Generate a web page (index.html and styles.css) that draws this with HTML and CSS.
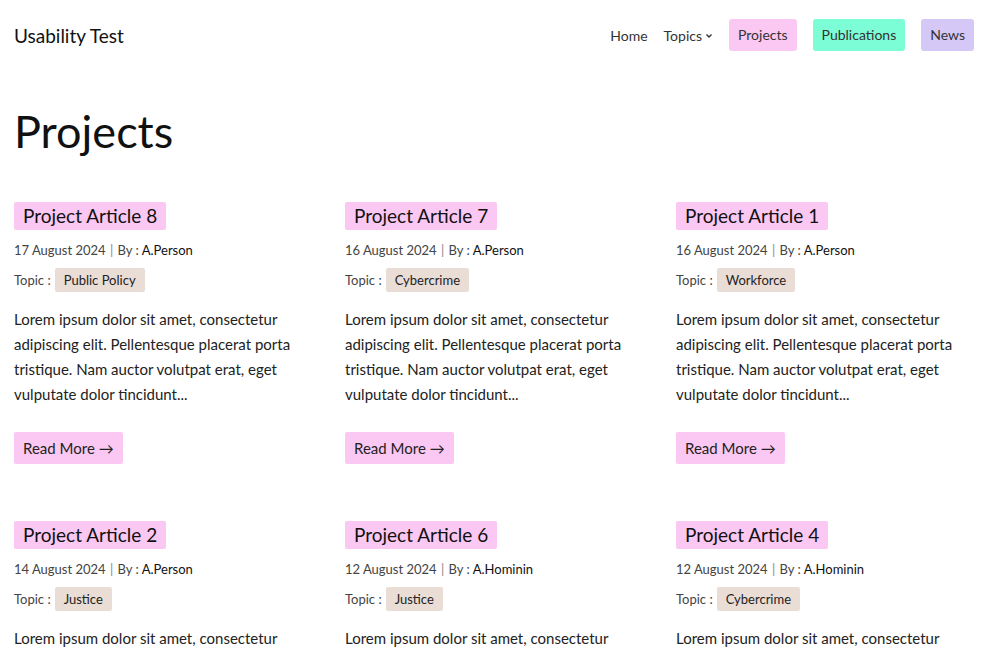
FILE: index.html
```html
<!DOCTYPE html>
<html lang="en">
<head>
    <meta charset="UTF-8">
    <meta name="viewport" content="width=device-width, initial-scale=1.0">
    <title>Usability Test - Projects</title>
    <link rel="stylesheet" href="styles.css">
</head>
<body>
    <header class="site-header">
        <a href="#" class="logo">Usability Test</a>
        <nav class="main-nav">
            <a href="#" class="nav-link">Home</a>
            <a href="#" class="nav-link">Topics
                <svg class="caret" width="8" height="6" viewBox="0 0 8 6"><path d="M1.5 1.5 L4 4 L6.5 1.5" fill="none" stroke="currentColor" stroke-width="1.4"/></svg>
            </a>
            <a href="#" class="nav-btn pink">Projects</a>
            <a href="#" class="nav-btn green">Publications</a>
            <a href="#" class="nav-btn purple">News</a>
        </nav>
    </header>

    <main class="content">
        <h1 class="page-title">Projects</h1>

        <div class="article-grid">
            <article class="article">
                <h2 class="article-title">Project Article 8</h2>
                <div class="meta">17 August 2024 <span class="sep">|</span> By : <span class="author">A.Person</span></div>
                <div class="topic">Topic : <span class="tag">Public Policy</span></div>
                <p class="excerpt">Lorem ipsum dolor sit amet, consectetur adipiscing elit. Pellentesque placerat porta tristique. Nam auctor volutpat erat, eget vulputate dolor tincidunt...</p>
                <a href="#" class="read-more">Read More &rarr;</a>
            </article>

            <article class="article">
                <h2 class="article-title">Project Article 7</h2>
                <div class="meta">16 August 2024 <span class="sep">|</span> By : <span class="author">A.Person</span></div>
                <div class="topic">Topic : <span class="tag">Cybercrime</span></div>
                <p class="excerpt">Lorem ipsum dolor sit amet, consectetur adipiscing elit. Pellentesque placerat porta tristique. Nam auctor volutpat erat, eget vulputate dolor tincidunt...</p>
                <a href="#" class="read-more">Read More &rarr;</a>
            </article>

            <article class="article">
                <h2 class="article-title">Project Article 1</h2>
                <div class="meta">16 August 2024 <span class="sep">|</span> By : <span class="author">A.Person</span></div>
                <div class="topic">Topic : <span class="tag">Workforce</span></div>
                <p class="excerpt">Lorem ipsum dolor sit amet, consectetur adipiscing elit. Pellentesque placerat porta tristique. Nam auctor volutpat erat, eget vulputate dolor tincidunt...</p>
                <a href="#" class="read-more">Read More &rarr;</a>
            </article>

            <article class="article">
                <h2 class="article-title">Project Article 2</h2>
                <div class="meta">14 August 2024 <span class="sep">|</span> By : <span class="author">A.Person</span></div>
                <div class="topic">Topic : <span class="tag">Justice</span></div>
                <p class="excerpt">Lorem ipsum dolor sit amet, consectetur adipiscing elit. Pellentesque placerat porta tristique. Nam auctor volutpat erat, eget vulputate dolor tincidunt...</p>
                <a href="#" class="read-more">Read More &rarr;</a>
            </article>

            <article class="article">
                <h2 class="article-title">Project Article 6</h2>
                <div class="meta">12 August 2024 <span class="sep">|</span> By : <span class="author">A.Hominin</span></div>
                <div class="topic">Topic : <span class="tag">Justice</span></div>
                <p class="excerpt">Lorem ipsum dolor sit amet, consectetur adipiscing elit. Pellentesque placerat porta tristique. Nam auctor volutpat erat, eget vulputate dolor tincidunt...</p>
                <a href="#" class="read-more">Read More &rarr;</a>
            </article>

            <article class="article">
                <h2 class="article-title">Project Article 4</h2>
                <div class="meta">12 August 2024 <span class="sep">|</span> By : <span class="author">A.Hominin</span></div>
                <div class="topic">Topic : <span class="tag">Cybercrime</span></div>
                <p class="excerpt">Lorem ipsum dolor sit amet, consectetur adipiscing elit. Pellentesque placerat porta tristique. Nam auctor volutpat erat, eget vulputate dolor tincidunt...</p>
                <a href="#" class="read-more">Read More &rarr;</a>
            </article>
        </div>
    </main>
</body>
</html>
```

FILE: styles.css
```css
* {
    box-sizing: border-box;
    font-family: Lato, "Noto Sans", sans-serif;
}

body {
    margin: 0;
    color: #1a1a1a;
    background: #fff;
}

a {
    text-decoration: none;
    color: inherit;
}

.site-header {
    display: flex;
    align-items: center;
    justify-content: space-between;
    padding: 19px 15px 0 14px;
    height: 51px;
}

.logo {
    font-size: 19px;
    color: #111;
}

.main-nav {
    display: flex;
    align-items: center;
    gap: 16px;
    font-size: 14px;
    color: #333;
}

.nav-link {
    display: flex;
    align-items: center;
    gap: 3px;
}

.caret {
    margin-top: 2px;
}

.nav-btn {
    display: block;
    padding: 0 9px;
    height: 32px;
    line-height: 32px;
    border-radius: 3px;
}

.pink { background: #fbc8f3; }
.green { background: #7dfdd5; }
.purple { background: #d5c8f7; }

.content {
    padding: 0 14px;
}

.page-title {
    font-size: 45px;
    font-weight: 400;
    margin: 55px 0 46px;
    line-height: 50px;
    color: #111;
}

.article-grid {
    display: grid;
    grid-template-columns: repeat(3, 300px);
    column-gap: 31px;
    row-gap: 57px;
}

.article-title {
    display: inline-block;
    margin: 0;
    padding: 0 9px;
    height: 28px;
    line-height: 28px;
    font-size: 19px;
    font-weight: 400;
    background: #fbc8f3;
    border-radius: 2px;
    color: #111;
}

.meta {
    margin-top: 12px;
    font-size: 13px;
    color: #444;
}

.sep {
    color: #888;
    margin: 0 1px;
}

.author {
    color: #111;
}

.topic {
    margin-top: 10px;
    font-size: 13px;
    color: #444;
    display: flex;
    align-items: center;
    gap: 4px;
}

.tag {
    display: inline-block;
    background: #eaddd6;
    color: #222;
    padding: 0 9px;
    height: 24px;
    line-height: 24px;
    border-radius: 2px;
}

.excerpt {
    margin: 15px 0 25px;
    font-size: 15px;
    line-height: 25px;
    color: #222;
}

.read-more {
    display: inline-block;
    background: #fbc8f3;
    padding: 0 9px;
    height: 32px;
    line-height: 32px;
    font-size: 15px;
    border-radius: 2px;
    color: #222;
}
```
